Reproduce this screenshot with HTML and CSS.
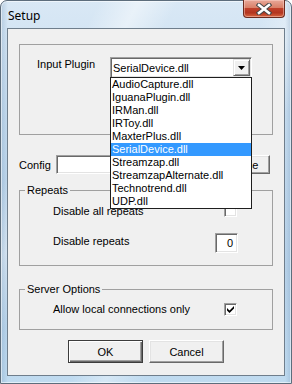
FILE: index.html
```html
<!DOCTYPE html>
<html>
<head>
    <link rel="stylesheet" href="styles.css">
</head>
<body>
    <div class="window">
        <div class="titlebar">
            <span class="title">Setup</span>
            <div class="close">
                <svg width="16" height="12" viewBox="0 0 16 12">
                    <path d="M3 2 L13 10 M13 2 L3 10" stroke="#474747" stroke-width="4.6" stroke-linecap="square"/>
                    <path d="M3 2 L13 10 M13 2 L3 10" stroke="#fff" stroke-width="2.6" stroke-linecap="square"/>
                </svg>
            </div>
        </div>

        <div class="client">
            <div class="plugin-box">
                <div class="plugin-row">
                    <span class="plugin-label">Input Plugin</span>
                    <div class="combo">
                        <span class="combo-text">SerialDevice.dll</span>
                        <span class="combo-btn">
                            <svg width="7" height="4" viewBox="0 0 7 4"><path d="M0 0 H7 L3.5 4 Z" fill="#000"/></svg>
                        </span>
                        <ul class="combo-list">
                            <li>AudioCapture.dll</li>
                            <li>IguanaPlugin.dll</li>
                            <li>IRMan.dll</li>
                            <li>IRToy.dll</li>
                            <li>MaxterPlus.dll</li>
                            <li class="selected">SerialDevice.dll</li>
                            <li>Streamzap.dll</li>
                            <li>StreamzapAlternate.dll</li>
                            <li>Technotrend.dll</li>
                            <li>UDP.dll</li>
                        </ul>
                    </div>
                </div>
            </div>

            <div class="config-row">
                <span class="config-label">Config</span>
                <div class="textbox config-input"></div>
                <div class="button browse">Browse</div>
            </div>

            <fieldset class="group repeats">
                <legend>Repeats</legend>
                <div class="opt-row check-row">
                    <span>Disable all repeats</span>
                    <span class="checkbox"></span>
                </div>
                <div class="opt-row num-row">
                    <span class="num-label">Disable repeats</span>
                    <span class="textbox num">0</span>
                </div>
            </fieldset>

            <fieldset class="group server">
                <legend>Server Options</legend>
                <div class="opt-row check-row">
                    <span class="server-label">Allow local connections only</span>
                    <span class="checkbox checked">
                        <svg width="7" height="7" viewBox="0 0 7 7"><path d="M0 2 L2.5 4.5 L7 0 V2.5 L2.5 7 L0 4.5 Z" fill="#000"/></svg>
                    </span>
                </div>
            </fieldset>

            <div class="buttons">
                <div class="button default">OK</div>
                <div class="button">Cancel</div>
            </div>
        </div>
    </div>
</body>
</html>
```

FILE: styles.css
```css
body {
    margin: 0;
    width: 292px;
    height: 384px;
    overflow: hidden;
    font-family: "Liberation Sans", Arial, sans-serif;
    font-size: 11px;
    color: #000;
    background: #fff;
}
.window {
    box-sizing: border-box;
    height: 384px;
    border: 1px solid #5d6d7c;
    border-radius: 7px 7px 0 0;
    padding: 0 6px 7px 6px;
    display: flex;
    flex-direction: column;
    box-shadow: inset 0 0 0 1px rgba(255, 255, 255, 0.55);
    background:
        linear-gradient(90deg, rgba(90,130,170,0.25) 0, rgba(90,130,170,0) 7px, rgba(90,130,170,0) 284px, rgba(90,130,170,0.25) 290px),
        linear-gradient(118deg, rgba(255,255,255,0) 20%, rgba(255,255,255,0.45) 28%, rgba(255,255,255,0) 36%, rgba(255,255,255,0) 55%, rgba(255,255,255,0.35) 62%, rgba(255,255,255,0) 70%),
        linear-gradient(180deg, #d9e8f5 0%, #c6dcef 30%, #b9d3ea 70%, #c0dbf0 100%);
}
.titlebar {
    height: 27px;
    display: flex;
    justify-content: space-between;
}
.title {
    font-family: "Noto Sans", sans-serif;
    font-size: 12px;
    margin: 6px 0 0 1px;
    color: #000;
}
.close {
    box-sizing: border-box;
    width: 42px;
    height: 18px;
    margin-top: -1px;
    border: 1px solid #6b2b1f;
    border-top: none;
    border-radius: 0 0 4px 4px;
    display: flex;
    align-items: center;
    justify-content: center;
    background: linear-gradient(180deg, #e8a899 0%, #d98068 45%, #c0402a 50%, #b33620 75%, #d8653f 100%);
    box-shadow: inset 0 0 0 1px rgba(255, 220, 210, 0.45);
}
.client {
    flex: 1;
    background: #f0f0f0;
    border: 1px solid #6f7e8c;
    padding: 15px 11px 0 11px;
    display: flex;
    flex-direction: column;
}
.plugin-box {
    box-sizing: border-box;
    height: 91px;
    border: 1px solid #a0a0a0;
    padding: 12px 0 0 17px;
}
.plugin-row {
    display: flex;
    align-items: flex-start;
}
.plugin-label {
    width: 73px;
    margin-top: 1px;
    line-height: 13px;
}
.combo {
    position: relative;
    box-sizing: border-box;
    width: 142px;
    height: 21px;
    background: #fff;
    border: 1px solid;
    border-color: #a0a0a0 #fff #fff #a0a0a0;
    box-shadow: inset 1px 1px #696969, inset -1px -1px #e3e3e3;
    display: flex;
    align-items: center;
    justify-content: space-between;
    padding: 0 1px 0 2px;
}
.combo-btn {
    box-sizing: border-box;
    width: 17px;
    height: 17px;
    background: #f0f0f0;
    border: 1px solid;
    border-color: #e3e3e3 #696969 #696969 #e3e3e3;
    box-shadow: inset 1px 1px #fff, inset -1px -1px #a0a0a0;
    display: flex;
    align-items: center;
    justify-content: center;
}
.combo-list {
    position: absolute;
    top: 100%;
    left: -1px;
    z-index: 2;
    box-sizing: border-box;
    width: 142px;
    margin: 0;
    padding: 0;
    list-style: none;
    background: #fff;
    border: 1px solid #1e1e1e;
}
.combo-list li {
    height: 13px;
    line-height: 13px;
    padding-left: 1px;
    white-space: nowrap;
}
.combo-list li.selected {
    background: #3399ff;
    color: #fff;
}
.config-row {
    display: flex;
    align-items: center;
    height: 19px;
    margin-top: 20px;
    padding-right: 3px;
}
.config-label {
    width: 37px;
}
.textbox {
    box-sizing: border-box;
    background: #fff;
    border: 1px solid;
    border-color: #a0a0a0 #fff #fff #a0a0a0;
    box-shadow: inset 1px 1px #696969, inset -1px -1px #e3e3e3;
}
.config-input {
    flex: 1;
    height: 19px;
    margin-right: 4px;
}
.button {
    box-sizing: border-box;
    background: #f0f0f0;
    border: 1px solid;
    border-color: #fff #696969 #696969 #fff;
    box-shadow: inset -1px -1px #a0a0a0, inset 1px 1px #e3e3e3;
    display: flex;
    align-items: center;
    justify-content: center;
}
.browse {
    width: 60px;
    height: 19px;
}
.group {
    margin: 0;
    padding: 0;
    border: 1px solid #a0a0a0;
    min-width: 0;
}
.group legend {
    margin-left: 5px;
    padding: 0 2px;
    line-height: 13px;
}
.repeats {
    margin-top: 10px;
    padding: 6px 0 11px 0;
}
.server {
    margin-top: 17px;
    padding: 6px 0 12px 0;
}
.opt-row {
    display: flex;
    align-items: center;
    justify-content: space-between;
    padding: 0 35px 0 33px;
}
.check-row {
    height: 15px;
}
.num-row {
    height: 22px;
    margin-top: 14px;
    padding-right: 34px;
}
.num-label {
    margin-bottom: 5px;
}
.server-label {
    margin-bottom: 2px;
}
.checkbox {
    box-sizing: border-box;
    width: 13px;
    height: 13px;
    background: #fff;
    border: 1px solid;
    border-color: #a0a0a0 #fff #fff #a0a0a0;
    box-shadow: inset 1px 1px #696969, inset -1px -1px #e3e3e3;
    display: flex;
    align-items: center;
    justify-content: center;
}
.num {
    width: 23px;
    height: 20px;
    text-align: right;
    padding-right: 4px;
    line-height: 18px;
}
.buttons {
    display: flex;
    justify-content: center;
    gap: 6px;
    margin-top: 10px;
}
.buttons .button {
    width: 75px;
    height: 23px;
}
.button.default {
    border: 1px solid #3c3c3c;
    box-shadow: inset 1px 1px #fff, inset -1px -1px #696969, inset -2px -2px #a0a0a0;
}
```
